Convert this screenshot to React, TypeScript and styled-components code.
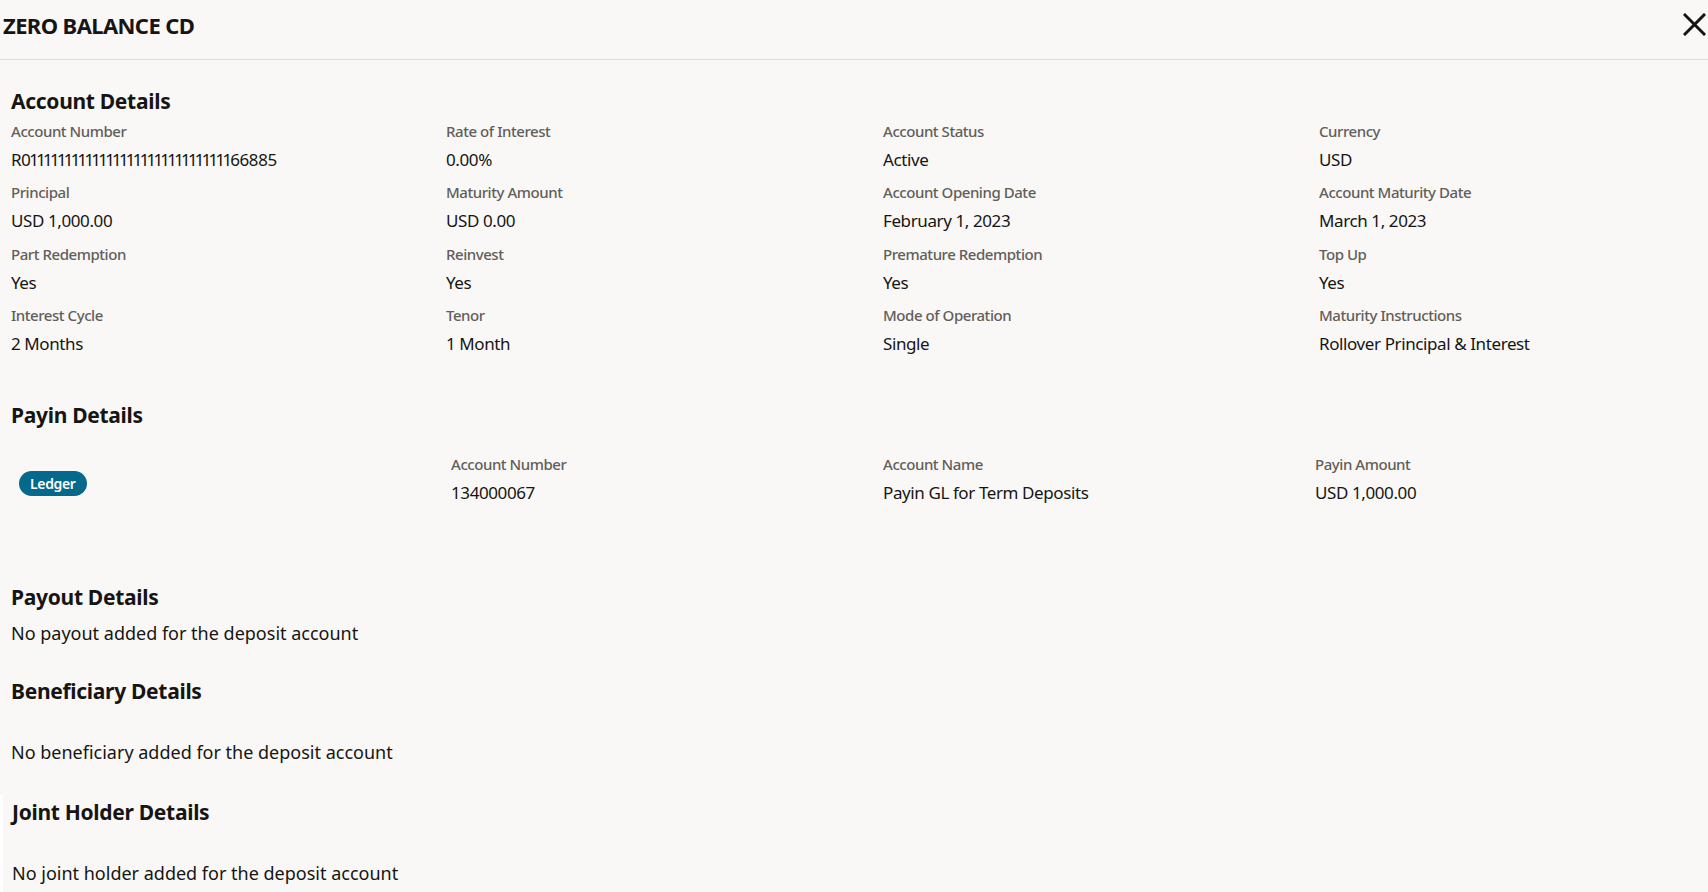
import React from "react";
import styled, { createGlobalStyle } from "styled-components";

const GlobalStyle = createGlobalStyle`
  html, body { margin: 0; padding: 0; background: #ffffff; }
  body { font-family: "Noto Sans", "Open Sans", sans-serif; color: #161513; }
  #root { min-height: 100vh; display: flex; flex-direction: column; }
  * { box-sizing: border-box; }
`;

const BG = "#f9f8f6";

const Page = styled.div`
  flex: 1;
  display: flex;
  flex-direction: column;
`;

const Panel = styled.div`
  background: ${BG};
  display: flex;
  flex-direction: column;
`;

const Header = styled.header`
  height: 60px;
  display: flex;
  align-items: flex-start;
  justify-content: space-between;
  padding: 0 2px 0 3px;
  border-bottom: 1px solid #dfddda;
`;

const Title = styled.h1`
  margin: 0;
  padding-top: 10px;
  font-size: 22px;
  line-height: 30px;
  font-weight: 700;
  letter-spacing: -0.6px;
`;

const CloseButton = styled.button`
  margin-top: 13px;
  width: 23px;
  height: 23px;
  padding: 0;
  border: none;
  background: transparent;
  display: flex;
  cursor: pointer;
`;

const Body = styled.div`
  padding: 27px 0 31px 11px;
  display: flex;
  flex-direction: column;
`;

const Heading = styled.h2<{ $top?: number }>`
  margin: ${(p) => p.$top ?? 0}px 0 0 0;
  font-size: 21px;
  line-height: 28px;
  font-weight: 700;
  letter-spacing: -0.3px;
`;

const Grid = styled.div`
  margin-top: 6px;
  display: grid;
  grid-template-columns: 435px 437px 436px 1fr;
  row-gap: 10.3px;
`;

const PayinGrid = styled.div`
  margin-top: 25.6px;
  padding-left: 8px;
  display: grid;
  grid-template-columns: 432px 432px 432px 1fr;
`;

const Field = styled.div`
  display: flex;
  flex-direction: column;
  gap: 7px;
`;

const Label = styled.div`
  font-size: 15px;
  line-height: 20px;
  font-weight: 500;
  color: #625e5a;
  letter-spacing: -0.45px;
`;

const Value = styled.div<{ $narrowDigits?: boolean }>`
  font-size: 17px;
  line-height: 24px;
  font-weight: 400;
  color: #161513;
  letter-spacing: ${(p) => (p.$narrowDigits ? "-0.6px" : "-0.4px")};
  font-variant-numeric: ${(p) => (p.$narrowDigits ? "proportional-nums" : "normal")};
`;

const BadgeCell = styled.div`
  align-self: center;
  margin-top: 7px;
  display: flex;
`;

const Badge = styled.span`
  height: 25px;
  padding: 0 11px;
  border-radius: 13px;
  background: #05698c;
  color: #ffffff;
  font-size: 14px;
  line-height: 25px;
  font-weight: 600;
  letter-spacing: -0.35px;
`;

const Message = styled.p<{ $top: number }>`
  margin: ${(p) => p.$top}px 0 0 0;
  font-size: 18px;
  line-height: 24px;
  font-weight: 400;
  letter-spacing: 0;
`;

const JointSection = styled.section`
  flex: 1;
  margin-left: 3px;
  background: ${BG};
  padding: 3px 0 0 9px;
`;

type FieldData = { label: string; value: string; id?: boolean };

const accountFields: FieldData[] = [
  { label: "Account Number", value: "R01111111111111111111111111111166885", id: true },
  { label: "Rate of Interest", value: "0.00%" },
  { label: "Account Status", value: "Active" },
  { label: "Currency", value: "USD" },
  { label: "Principal", value: "USD 1,000.00" },
  { label: "Maturity Amount", value: "USD 0.00" },
  { label: "Account Opening Date", value: "February 1, 2023" },
  { label: "Account Maturity Date", value: "March 1, 2023" },
  { label: "Part Redemption", value: "Yes" },
  { label: "Reinvest", value: "Yes" },
  { label: "Premature Redemption", value: "Yes" },
  { label: "Top Up", value: "Yes" },
  { label: "Interest Cycle", value: "2 Months" },
  { label: "Tenor", value: "1 Month" },
  { label: "Mode of Operation", value: "Single" },
  { label: "Maturity Instructions", value: "Rollover Principal & Interest" },
];

const payinFields: FieldData[] = [
  { label: "Account Number", value: "134000067" },
  { label: "Account Name", value: "Payin GL for Term Deposits" },
  { label: "Payin Amount", value: "USD 1,000.00" },
];

const CloseIcon = () => (
  <svg width="23" height="23" viewBox="0 0 23 23" fill="none">
    <path d="M2 2 L21 21 M21 2 L2 21" stroke="#161513" strokeWidth="3" strokeLinecap="square" />
  </svg>
);

const FieldItem = ({ label, value, id }: FieldData) => (
  <Field>
    <Label>{label}</Label>
    <Value $narrowDigits={id}>{value}</Value>
  </Field>
);

export default function App() {
  return (
    <Page>
      <GlobalStyle />
      <Panel>
        <Header>
          <Title>ZERO BALANCE CD</Title>
          <CloseButton aria-label="Close">
            <CloseIcon />
          </CloseButton>
        </Header>
        <Body>
          <Heading>Account Details</Heading>
          <Grid>
            {accountFields.map((f) => (
              <FieldItem key={f.label} {...f} />
            ))}
          </Grid>

          <Heading $top={45}>Payin Details</Heading>
          <PayinGrid>
            <BadgeCell>
              <Badge>Ledger</Badge>
            </BadgeCell>
            {payinFields.map((f) => (
              <FieldItem key={f.label} {...f} />
            ))}
          </PayinGrid>

          <Heading $top={78}>Payout Details</Heading>
          <Message $top={10}>No payout added for the deposit account</Message>

          <Heading $top={32}>Beneficiary Details</Heading>
          <Message $top={35}>No beneficiary added for the deposit account</Message>
        </Body>
      </Panel>
      <JointSection>
        <Heading>Joint Holder Details</Heading>
        <Message $top={35}>No joint holder added for the deposit account</Message>
      </JointSection>
    </Page>
  );
}
